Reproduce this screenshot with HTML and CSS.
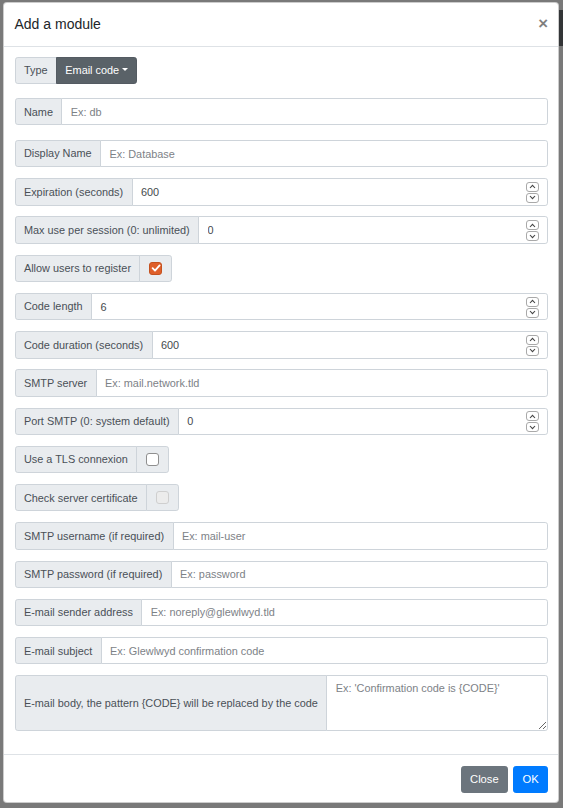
FILE: index.html
```html
<!DOCTYPE html>
<html lang="en">
<head>
<meta charset="utf-8">
<title>Add a module</title>
<link rel="stylesheet" href="styles.css">
</head>
<body>
<div class="modal">
  <div class="modal-header">
    <h5 class="modal-title">Add a module</h5>
    <button class="close" type="button">×</button>
  </div>
  <div class="modal-body">
    <div class="ig row-type">
      <span class="igt">Type</span>
      <button class="btn-dd" type="button">Email code<span class="caret"></span></button>
    </div>
    <div class="ig row-name">
      <span class="igt">Name</span>
      <input class="fc" type="text" placeholder="Ex: db">
    </div>
    <div class="ig">
      <span class="igt">Display Name</span>
      <input class="fc" type="text" placeholder="Ex: Database">
    </div>
    <div class="ig">
      <span class="igt">Expiration (seconds)</span>
      <div class="fc num"><input class="num-in" type="text" value="600"><span class="spin"><span class="sb up"></span><span class="sb down"></span></span></div>
    </div>
    <div class="ig">
      <span class="igt">Max use per session (0: unlimited)</span>
      <div class="fc num"><input class="num-in" type="text" value="0"><span class="spin"><span class="sb up"></span><span class="sb down"></span></span></div>
    </div>
    <div class="ig">
      <span class="igt">Allow users to register</span>
      <span class="igt chk"><span class="cb checked"><svg viewBox="0 0 12 12" width="12" height="12"><path d="M2.6 6.2 L5 8.6 L9.6 3.4" fill="none" stroke="#fff" stroke-width="1.8" stroke-linecap="round" stroke-linejoin="round"/></svg></span></span>
    </div>
    <div class="ig">
      <span class="igt">Code length</span>
      <div class="fc num"><input class="num-in" type="text" value="6"><span class="spin"><span class="sb up"></span><span class="sb down"></span></span></div>
    </div>
    <div class="ig">
      <span class="igt">Code duration (seconds)</span>
      <div class="fc num"><input class="num-in" type="text" value="600"><span class="spin"><span class="sb up"></span><span class="sb down"></span></span></div>
    </div>
    <div class="ig">
      <span class="igt">SMTP server</span>
      <input class="fc" type="text" placeholder="Ex: mail.network.tld">
    </div>
    <div class="ig">
      <span class="igt">Port SMTP (0: system default)</span>
      <div class="fc num"><input class="num-in" type="text" value="0"><span class="spin"><span class="sb up"></span><span class="sb down"></span></span></div>
    </div>
    <div class="ig">
      <span class="igt">Use a TLS connexion</span>
      <span class="igt chk"><span class="cb"></span></span>
    </div>
    <div class="ig">
      <span class="igt">Check server certificate</span>
      <span class="igt chk"><span class="cb disabled"></span></span>
    </div>
    <div class="ig">
      <span class="igt">SMTP username (if required)</span>
      <input class="fc" type="text" placeholder="Ex: mail-user">
    </div>
    <div class="ig">
      <span class="igt">SMTP password (if required)</span>
      <input class="fc" type="text" placeholder="Ex: password">
    </div>
    <div class="ig">
      <span class="igt">E-mail sender address</span>
      <input class="fc" type="text" placeholder="Ex: noreply@glewlwyd.tld">
    </div>
    <div class="ig">
      <span class="igt">E-mail subject</span>
      <input class="fc" type="text" placeholder="Ex: Glewlwyd confirmation code">
    </div>
    <div class="ig row-body">
      <span class="igt">E-mail body, the pattern {CODE} will be replaced by the code</span>
      <textarea class="fc ta" placeholder="Ex: 'Confirmation code is {CODE}'"></textarea>
    </div>
  </div>
  <div class="modal-footer">
    <button class="btn btn-secondary" type="button">Close</button>
    <button class="btn btn-primary" type="button">OK</button>
  </div>
</div>
</body>
</html>
```

FILE: styles.css
```css
* { box-sizing: border-box; }
html, body { margin: 0; padding: 0; }
body {
  font-family: "Liberation Sans", Arial, sans-serif;
  font-size: 11.2px;
  line-height: 1.5;
  color: #212529;
  background: linear-gradient(#333537, #333537) no-repeat right 0 top 10px / 5px 36px, #797979;
  height: 808px;
  overflow: hidden;
}
.modal {
  margin: 2px 0 0 3px;
  width: 556px;
  background: #fff;
  border: 1px solid rgba(0,0,0,.2);
  border-radius: 4px;
}
.modal-header {
  display: flex;
  align-items: flex-start;
  justify-content: space-between;
  padding: 11.2px 9px 10.5px 10.5px;
  border-bottom: 1px solid #dee2e6;
}
.modal-title {
  margin: 0;
  font-size: 14px;
  font-weight: 500;
  line-height: 1.5;
  color: #212529;
}
.close {
  background: transparent;
  border: 0;
  padding: 0;
  margin: -1px 1px 0 0;
  font-family: inherit;
  font-size: 16.8px;
  font-weight: 700;
  line-height: 21px;
  color: #000;
  opacity: .5;
  text-shadow: 0 1px 0 #fff;
}
.modal-body {
  padding: 10px 10px 11.5px 10.5px;
}
.ig {
  display: flex;
  align-items: stretch;
  height: 27.4px;
  margin-bottom: 10.85px;
}
.row-type { margin-bottom: 14px; }
.row-name { margin-bottom: 14.5px; }
.igt {
  display: flex;
  align-items: center;
  padding: 0 8.4px;
  font-size: 10.9px;
  color: #495057;
  background: #e9ecef;
  border: 1px solid #ced4da;
  border-radius: 2.8px 0 0 2.8px;
  white-space: nowrap;
}
.igt.chk {
  margin-left: -1px;
  border-radius: 0 2.8px 2.8px 0;
  padding: 0 8.8px 0 9px;
}
.fc {
  flex: 1;
  min-width: 0;
  margin: 0 0 0 -1px;
  padding: 0 8.4px;
  font-family: inherit;
  font-size: 10.9px;
  color: #495057;
  background: #fff;
  border: 1px solid #ced4da;
  border-radius: 0 2.8px 2.8px 0;
  outline: none;
}
.fc::placeholder { color: #7d8287; opacity: 1; }
.num {
  display: flex;
  align-items: center;
  padding-right: 8.4px;
}
.num-in {
  flex: 1;
  min-width: 0;
  border: 0;
  padding: 0;
  margin: 0;
  font-family: inherit;
  font-size: 10.9px;
  color: #45494d;
  background: transparent;
  outline: none;
}
.spin {
  display: flex;
  flex-direction: column;
  gap: 1px;
  margin-top: 1px;
}
.sb {
  display: block;
  width: 12.5px;
  height: 10px;
  border: 1px solid #a9a9a9;
  border-radius: 3px;
  background: #fff center / 7px 5px no-repeat;
}
.sb.up {
  background-image: url("data:image/svg+xml;utf8,<svg xmlns='http://www.w3.org/2000/svg' viewBox='0 0 7 5'><path d='M1 4 L3.5 1.3 L6 4' fill='none' stroke='%23444' stroke-width='1.1'/></svg>");
}
.sb.down {
  background-image: url("data:image/svg+xml;utf8,<svg xmlns='http://www.w3.org/2000/svg' viewBox='0 0 7 5'><path d='M1 1 L3.5 3.7 L6 1' fill='none' stroke='%23444' stroke-width='1.1'/></svg>");
}
.cb {
  display: block;
  width: 13px;
  height: 13px;
  border: 1px solid #8f8f8f;
  border-radius: 3px;
  background: #fff;
}
.cb.checked {
  background: #df5f2a;
  border-color: #c4511f;
}
.cb.checked svg { display: block; margin: -0.5px 0 0 -0.5px; }
.cb.disabled {
  background: #ececec;
  border-color: #cfcfcf;
}
.btn-dd {
  display: flex;
  align-items: center;
  margin-left: -1px;
  padding: 0 8.4px;
  font-family: inherit;
  font-size: 10.9px;
  color: #fff;
  background: #5a6268;
  border: 1px solid #545b62;
  border-radius: 0 2.8px 2.8px 0;
}
.caret {
  display: inline-block;
  margin-left: 2.9px;
  border-top: 3.4px solid #fff;
  border-right: 3.4px solid transparent;
  border-left: 3.4px solid transparent;
  margin-top: -1px;
}
.row-body { height: 56px; }
.row-body .igt { align-items: center; }
.ta {
  height: 56px;
  padding: 4.2px 8.4px;
  resize: both;
  line-height: 1.5;
}
.modal-footer {
  display: flex;
  justify-content: flex-end;
  align-items: center;
  gap: 5px;
  padding: 11.2px 10px 9.5px;
  border-top: 1px solid #dee2e6;
}
.btn {
  height: 27.2px;
  padding: 0 8.4px;
  font-family: inherit;
  font-size: 11.2px;
  color: #fff;
  border: 1px solid transparent;
  border-radius: 2.8px;
}
.btn-secondary { background: #6c757d; border-color: #6c757d; }
.btn-primary { background: #007bff; border-color: #007bff; }
```
